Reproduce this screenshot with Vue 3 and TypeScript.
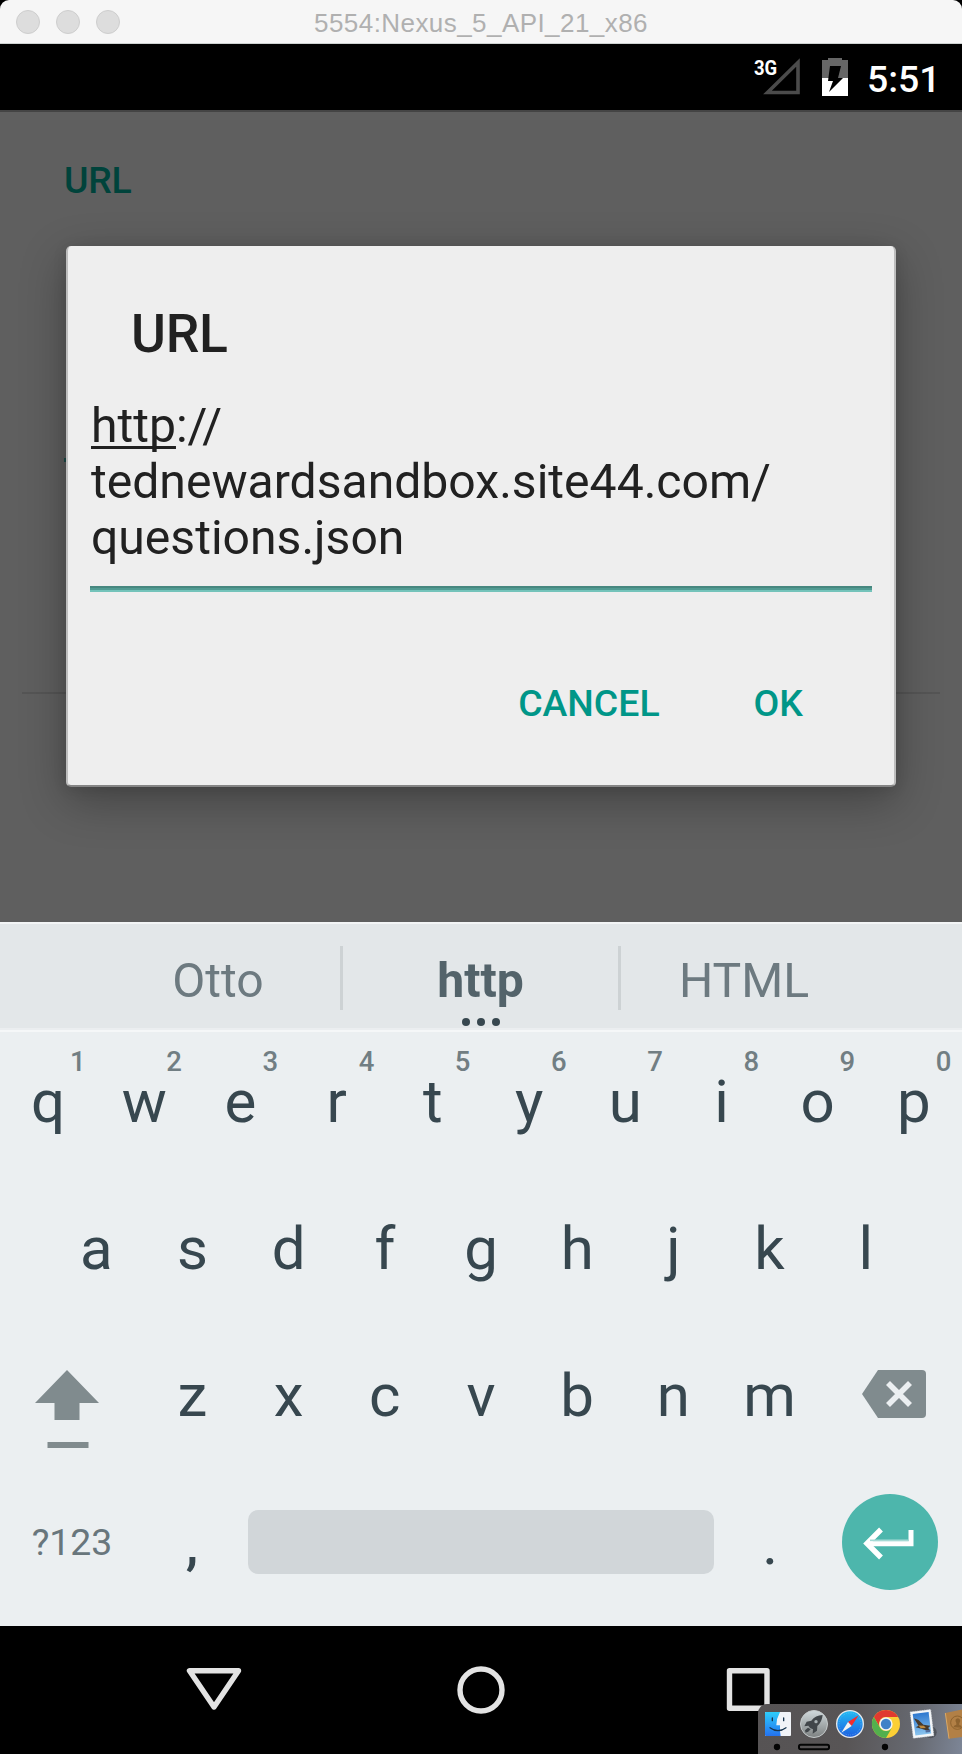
<script setup lang="ts">
interface Key {
  label: string
  hint?: string
}

const digits = '1234567890'
const topRow: Key[] = 'qwertyuiop'.split('').map((label, i) => ({ label, hint: digits[i] }))
const homeRow: Key[] = 'asdfghjkl'.split('').map((label) => ({ label }))
const bottomRow: Key[] = 'zxcvbnm'.split('').map((label) => ({ label }))
const suggestions = ['Otto', 'http', 'HTML']
</script>

<template>
  <div class="screen">
    <header class="titlebar">
      <div class="lights"><i></i><i></i><i></i></div>
      <span class="window-title">5554:Nexus_5_API_21_x86</span>
    </header>

    <div class="statusbar">
      <div class="signal">
        <span class="network">3G</span>
        <svg width="38" height="38" viewBox="0 0 38 38">
          <path d="M4.5 34.5 L35 4.5 V34.5 Z" fill="none" stroke="#4b4b4b" stroke-width="3.6" />
        </svg>
      </div>
      <svg class="battery" width="26" height="38" viewBox="0 0 26 38">
        <path d="M0 2h6V0h14v2h6v18H0z" fill="#666" />
        <path d="M0 20h26v18H0z" fill="#fff" />
        <path d="M8 8h11l-3 12h5L7 34l4-11H6z" fill="#000" />
      </svg>
      <span class="clock">5:51</span>
    </div>

    <main class="app">
      <h2 class="pref-header">URL</h2>
      <div class="cursor-dot"></div>
      <div class="pref-divider"></div>

      <section class="dialog">
        <h1>URL</h1>
        <div class="field"><span class="composing">http</span>://<br />tednewardsandbox.site44.com/<br />questions.json</div>
        <div class="actions">
          <button class="cancel">CANCEL</button>
          <button>OK</button>
        </div>
      </section>
    </main>

    <div class="suggestions">
      <div v-for="(word, i) in suggestions" :key="word" class="suggestion" :class="{ main: i === 1 }">
        {{ word }}
        <span v-if="i === 1" class="dots"><i></i><i></i><i></i></span>
      </div>
    </div>

    <div class="keyboard">
      <div class="row">
        <div v-for="k in topRow" :key="k.label" class="key">
          {{ k.label }}<span class="hint">{{ k.hint }}</span>
        </div>
      </div>
      <div class="row">
        <div v-for="k in homeRow" :key="k.label" class="key">{{ k.label }}</div>
      </div>
      <div class="row">
        <div class="wide shift">
          <svg width="66" height="82" viewBox="0 0 66 82">
            <path d="M33 2 L65 35 H45.5 V52 H20.5 V35 H1 Z" fill="#808b8e" />
            <path d="M13.5 74h41v6h-41z" fill="#808b8e" />
          </svg>
        </div>
        <div v-for="k in bottomRow" :key="k.label" class="key">{{ k.label }}</div>
        <div class="wide delete">
          <svg width="64" height="48" viewBox="0 0 64 48">
            <path d="M16 0H60Q64 0 64 4V44Q64 48 60 48H16L0 24Z" fill="#808b8e" />
            <path d="M26 13L48 35M48 13L26 35" stroke="#ebeff1" stroke-width="5.6" />
          </svg>
        </div>
      </div>
      <div class="row last">
        <div class="symbols">?123</div>
        <div class="key comma">,</div>
        <div class="space"></div>
        <div class="key period">.</div>
        <div class="enter">
          <svg width="52" height="34" viewBox="0 0 52 34">
            <path d="M18 2.5 L4 16.5 L18 30.5" fill="none" stroke="#fff" stroke-width="5.4" />
            <path d="M7 13.5H45" stroke="#a5dad5" stroke-width="2" />
            <path d="M7 16.8H48V3" fill="none" stroke="#fff" stroke-width="5" />
          </svg>
        </div>
      </div>
    </div>

    <nav class="navbar">
      <svg width="962" height="128" viewBox="0 0 962 128" fill="none" stroke="#e3e3e3" stroke-width="5.4" stroke-linejoin="round">
        <path d="M189.5 44.8 H238.5 L214 81 Z" />
        <circle cx="481" cy="64" r="21" />
        <rect x="729.5" y="44.8" width="37.5" height="37.5" />
      </svg>
    </nav>

    <aside class="dock">
      <svg width="204" height="50" viewBox="18 42 612 150">
        <defs>
          <linearGradient id="finderL" x1="0" y1="0" x2="0" y2="1">
            <stop offset="0" stop-color="#2dcdfb" /><stop offset="1" stop-color="#2472f0" />
          </linearGradient>
          <linearGradient id="launch" x1="0" y1="0" x2="0" y2="1">
            <stop offset="0" stop-color="#d0d9dc" /><stop offset="1" stop-color="#7d8181" />
          </linearGradient>
          <linearGradient id="safari" x1="0" y1="0" x2="0" y2="1">
            <stop offset="0" stop-color="#22bdf5" /><stop offset="1" stop-color="#1c5de0" />
          </linearGradient>
          <linearGradient id="sky" x1="0" y1="0" x2="0" y2="1">
            <stop offset="0" stop-color="#2e78cf" /><stop offset="1" stop-color="#8ac4ee" />
          </linearGradient>
        </defs>

        <rect x="39" y="66" width="78" height="72" rx="3" fill="#f1f4f8" />
        <path d="M42 66H84Q73 86 73 106H84Q83 122 86 138H42Q39 138 39 135V69Q39 66 42 66Z" fill="url(#finderL)" />
        <path d="M61 84v8M95 84v8" stroke="#17354f" stroke-width="4" stroke-linecap="round" />
        <path d="M54 113Q78 131 102 113" fill="none" stroke="#17354f" stroke-width="3.5" stroke-linecap="round" />

        <circle cx="186" cy="102" r="40.5" fill="url(#launch)" stroke="#c5cacb" stroke-width="3" />
        <path d="M212 75Q190 76 178 92L164 95 157 109 169 107Q173 116 183 118L182 131 195 122 196 108Q210 96 212 75Z" fill="#41464a" />
        <circle cx="192" cy="95" r="5" fill="#a9b1b4" />
        <path d="M168 113L159 121 161 128 170 124 176 118Z" fill="#41464a" />

        <circle cx="294" cy="102" r="40" fill="url(#safari)" stroke="#e4e8ec" stroke-width="4" />
        <circle cx="294" cy="102" r="33" fill="none" stroke="#72bcf4" stroke-width="3" stroke-dasharray="1.5 4" />
        <path d="M320 76L299 108 288 96Z" fill="#f42c2e" />
        <path d="M268 128L288 96 299 108Z" fill="#f2f2f2" />

        <circle cx="402" cy="102" r="42" fill="#fbcf35" />
        <path d="M365.6 81A42 42 0 0 1 438.4 81H402A21 21 0 0 0 383.8 112.5Z" fill="#e03a2f" />
        <path d="M365.6 81L383.8 112.5A21 21 0 0 0 420.2 112.5L402 144A42 42 0 0 1 365.6 81Z" fill="#53b04d" />
        <circle cx="402" cy="102" r="20" fill="#f4f4f4" />
        <circle cx="402" cy="102" r="15.5" fill="#3f82c8" />

        <circle cx="536" cy="127" r="18" fill="#454a50" opacity=".75" />
        <g transform="rotate(-7 510 102)">
          <path d="M479 62H541V141H479Z" fill="#f4f6f8" stroke="#d8dde2" stroke-width="2" stroke-dasharray="4 3" />
          <path d="M486 69H534V134H486Z" fill="url(#sky)" />
          <path d="M488 82L501 89 514 105 534 110 527 116 533 125 520 122 504 115 490 109 499 106Z" fill="#473a2c" />
          <path d="M499 105L515 108 520 115 505 114Z" fill="#c08a3c" />
          <path d="M518 122h13v7h-13z" fill="#506b9b" />
        </g>

        <path d="M580 69L632 58V141L591 146Z" fill="#b28046" />
        <path d="M580 69L591 146" stroke="#dba965" stroke-width="3" />
        <circle cx="616" cy="98" r="20" fill="none" stroke="#8e632f" stroke-width="3" />
        <path d="M604 112q2-7 9-8v-5q-7-12 5-14 11 4 4 15v5q7 1 8 8z" fill="#8e632f" />

        <circle cx="75" cy="171" r="9.5" fill="#050505" />
        <rect x="141" y="164.5" width="90" height="13" rx="5" fill="none" stroke="#050505" stroke-width="6" />
        <circle cx="399" cy="171" r="9.5" fill="#050505" />
      </svg>
    </aside>
  </div>
</template>

<style>
html,
body {
  background: #000;
  overflow: hidden;
}
</style>

<style scoped>
.screen {
  position: relative;
  width: 962px;
  height: 1754px;
  display: flex;
  flex-direction: column;
  background: #000;
  font-family: Roboto, 'Liberation Sans', sans-serif;
  overflow: hidden;
}
.titlebar {
  box-sizing: border-box;
  height: 44px;
  flex: none;
  display: grid;
  grid-template-columns: 120px 1fr 120px;
  background: #f6f6f6;
  border-bottom: 1px solid #ced2d1;
  border-radius: 9px 9px 0 0;
}
.lights {
  display: flex;
  gap: 16px;
  padding: 10px 0 0 16px;
}
.lights i {
  box-sizing: border-box;
  width: 24px;
  height: 24px;
  border: 1px solid #cecece;
  border-radius: 50%;
  background: #dddddd;
}
.window-title {
  font: 26px/46px 'Liberation Sans', Arial, sans-serif;
  letter-spacing: 0.44px;
  color: #b0b0b0;
  text-align: center;
  white-space: nowrap;
}
.statusbar {
  height: 66px;
  flex: none;
  display: flex;
  justify-content: flex-end;
  align-items: flex-start;
  padding-right: 28px;
}
.signal {
  display: flex;
  margin: 14px 21px 0 0;
}
.network {
  width: 9px;
  white-space: nowrap;
  font-size: 21px;
  line-height: 20px;
  font-weight: 700;
  color: #fff;
  transform: scaleX(0.88);
  transform-origin: left top;
}
.battery {
  margin-top: 14px;
}
.clock {
  width: 67px;
  margin-left: 19px;
  font-size: 37.4px;
  line-height: 70px;
  font-weight: 500;
  color: #fff;
  white-space: nowrap;
}
.app {
  position: relative;
  height: 812px;
  box-sizing: border-box;
  flex: none;
  background: #5f5f5f;
  border-top: 2px solid #444;
  overflow: hidden;
}
.pref-header {
  margin: 46px 0 0 64px;
  font-size: 37.4px;
  line-height: 45px;
  font-weight: 500;
  letter-spacing: -0.3px;
  color: #00433b;
}
.cursor-dot {
  width: 4px;
  height: 4px;
  margin: 255px 0 0 64px;
  background: #1f4d49;
}
.pref-divider {
  height: 2px;
  margin: 230px 22px 0;
  background: #555;
}
.dialog {
  position: absolute;
  box-sizing: border-box;
  left: 66px;
  top: 134px;
  width: 830px;
  height: 541px;
  padding: 54px 22px 0 22px;
  background: #eee;
  border: solid #bdbdbd;
  border-width: 0 2px 2px;
  border-bottom-color: #858585;
  border-radius: 5px;
  box-shadow: 0 14px 46px rgba(0, 0, 0, 0.3), 0 2px 14px rgba(0, 0, 0, 0.1);
}
h1 {
  margin: 0 0 0 41px;
  font-size: 53.4px;
  line-height: 67px;
  font-weight: 500;
  letter-spacing: -0.3px;
  color: #212121;
}
.field {
  height: 225px;
  box-sizing: border-box;
  padding: 31px 0 0 1px;
  margin-bottom: 86px;
  font-size: 48.1px;
  line-height: 56px;
  color: #212121;
  border-bottom: 2px solid #74c3ba;
  box-shadow: inset 0 -2px #519b92, inset 0 -4px #47877f;
  white-space: nowrap;
}
.composing {
  text-decoration: underline;
  text-decoration-thickness: 3px;
  text-underline-offset: 4px;
  text-decoration-skip-ink: none;
}
.actions {
  display: flex;
  justify-content: flex-end;
  padding-right: 69px;
  gap: 94px;
}
button {
  padding: 0;
  border: 0;
  background: none;
  font: 500 37.4px/50px Roboto, sans-serif;
  color: #009688;
}
.suggestions {
  box-sizing: border-box;
  height: 110px;
  flex: none;
  display: grid;
  grid-template-columns: 244px 281px 246px;
  padding: 22px 0 0 96px;
  background: #e3e7e9;
  border-top: 2px solid #f3f5f6;
  border-bottom: 2px solid #f5f7f8;
  box-shadow: inset 0 -2px #ebeef0;
}
.suggestion {
  position: relative;
  height: 64px;
  text-align: center;
  font-size: 48.1px;
  line-height: 70px;
  color: #6d7a80;
}
.suggestion.main {
  box-sizing: border-box;
  border-left: 3px solid #cdd2d4;
  border-right: 3px solid #cdd2d4;
  font-weight: 700;
  color: #53636a;
}
.dots {
  position: absolute;
  left: 0;
  right: 0;
  bottom: -16px;
  display: flex;
  justify-content: center;
  gap: 7px;
}
.dots i {
  width: 8px;
  height: 8px;
  border-radius: 50%;
  background: #37474f;
}
.keyboard {
  height: 594px;
  flex: none;
  background: #ebeff1;
}
.row {
  height: 147px;
  display: flex;
  justify-content: center;
}
.key {
  position: relative;
  width: 96.2px;
  text-align: center;
  font-size: 60px;
  line-height: 139px;
  color: #37474f;
}
.hint {
  position: absolute;
  left: 70px;
  top: 16px;
  font-size: 27.5px;
  line-height: 28px;
  font-weight: 500;
  color: #717e83;
}
.wide {
  width: 144.3px;
}
.shift svg {
  display: block;
  margin: 42px 0 0 34px;
}
.delete svg {
  display: block;
  margin: 44px 0 0 44px;
}
.last {
  justify-content: flex-start;
}
.symbols {
  width: 144px;
  text-align: center;
  font-size: 37.4px;
  line-height: 139px;
  color: #68767c;
}
.last .comma {
  font-size: 56px;
  font-weight: 500;
  line-height: 143px;
}
.last .period {
  line-height: 141px;
}
.space {
  width: 466px;
  height: 64px;
  margin: 37px 8px 0;
  border-radius: 10px;
  background: #d1d6d9;
}
.enter {
  box-sizing: border-box;
  width: 96px;
  height: 96px;
  margin: 21px 0 0 24px;
  padding: 3px 3px 0 0;
  display: flex;
  align-items: center;
  justify-content: center;
  border-radius: 50%;
  background: #4db6ac;
}
.navbar {
  height: 128px;
  flex: none;
  background: #000;
}
.navbar svg {
  display: block;
}
.dock {
  position: absolute;
  right: 0;
  bottom: 0;
  width: 204px;
  height: 50px;
  border-radius: 9px 0 0 0;
  background: linear-gradient(100deg, #565354 0%, #585556 45%, #676a72 78%, #7d8697 100%);
  overflow: hidden;
}
.dock svg {
  display: block;
}
</style>
